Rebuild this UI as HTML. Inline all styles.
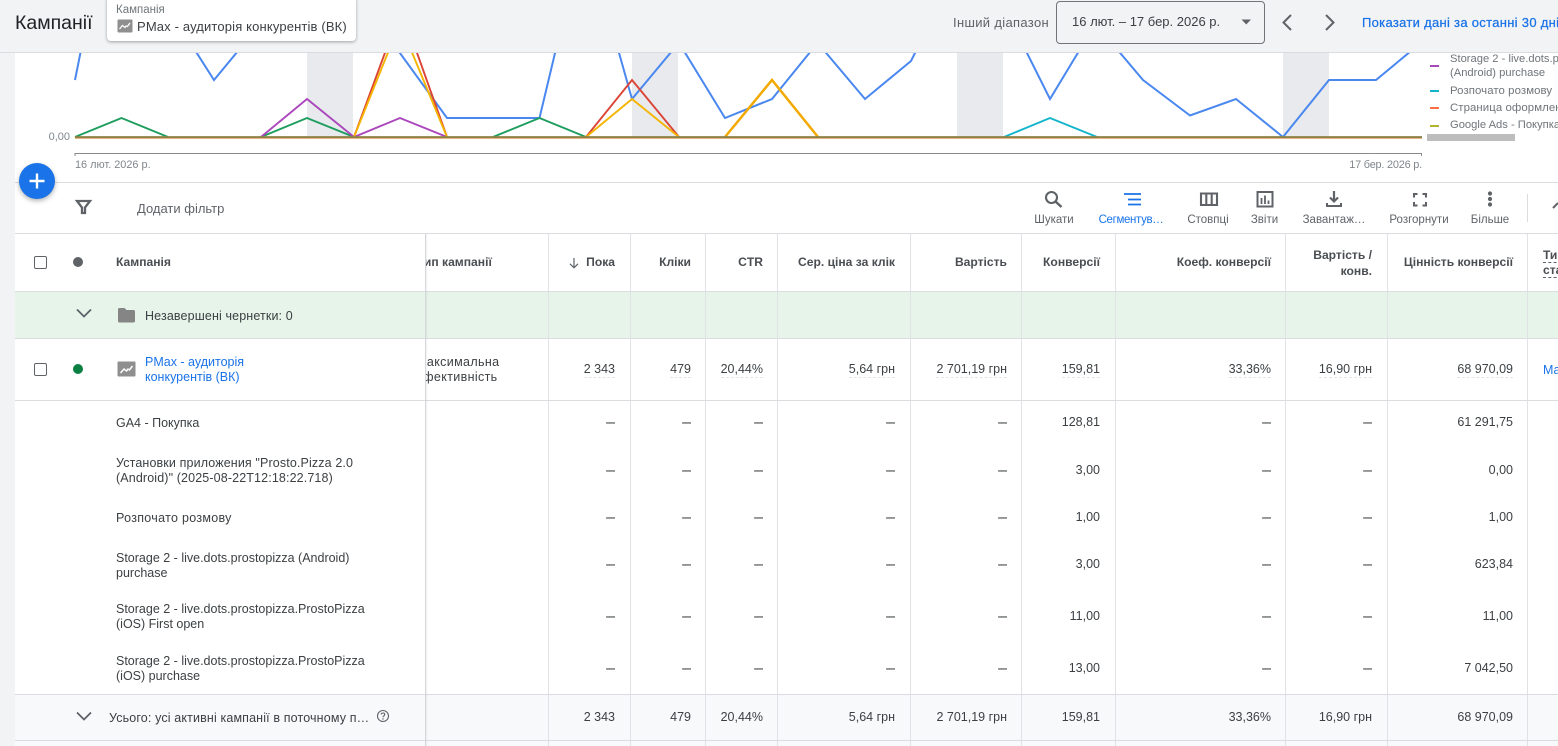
<!DOCTYPE html>
<html lang="uk"><head><meta charset="utf-8"><title>Кампанії</title>
<style>
html,body{margin:0;padding:0;width:1558px;height:746px;overflow:hidden;background:#f1f3f4;font-family:"Liberation Sans",Arial,sans-serif;color:#3c4043;font-size:12.5px}
div,span,svg{position:absolute;box-sizing:border-box}
.nw{white-space:nowrap}
#main{left:15px;top:53px;width:1543px;height:693px;background:#fff}
.hl{left:15px;width:1543px;height:1px;background:#dadce0}
.vl{top:234px;width:1px;height:512px;background:#e0e2e5}
.row{left:15px;width:1543px}
.c{white-space:nowrap;text-align:right;top:-1px}
.h .c{top:0}
.c1{right:943px}.c2{right:867px}.c3{right:795px}.c4{right:663px}.c5{right:551px}.c6{right:458px}.c7{right:287px}.c8{right:186px}.c9{right:45px}
.u{border-bottom:1px dashed #e3e5e8;line-height:15px;display:inline-block}
.d{font-size:16px;color:#3c4043}
.h{font-weight:bold;color:#4a4d51;font-size:12.1px}
.n{left:101px;white-space:nowrap;line-height:15px;color:#3c4043}
.tb{font-size:11.5px;color:#5f6368;white-space:nowrap;top:213px;line-height:14px;transform:translateX(-50%)}
.ic{top:189px;width:22px;height:22px}
.lg{left:1450px;font-size:11.4px;letter-spacing:.08px;color:#70757a;white-space:nowrap;line-height:14px}
.ld{left:1430px;width:9px;height:2px}
.cb{left:34px;width:13px;height:13px;border:1.5px solid #5f6368;border-radius:2px;background:#fff}
</style></head><body>
<div id="main"></div>

<svg style="left:0;top:0" width="1558" height="182" viewBox="0 0 1558 182" fill="none">
<defs><clipPath id="cp"><rect x="15" y="53" width="1543" height="129"/></clipPath></defs>
<g clip-path="url(#cp)" stroke-width="1.900" stroke-linejoin="miter">
<g fill="#e8eaed" stroke="none"><rect x="307" y="53" width="46" height="84"/><rect x="632" y="53" width="46" height="84"/><rect x="957" y="53" width="46" height="84"/><rect x="1283" y="53" width="46" height="84"/></g>
<path stroke="#4a88f0" stroke-width="2" d="M75 80L81 50M195.500 51L214 80L238 51M398.500 51L447 118L539.500 118L555.500 51M618.500 51L632 99L672 51M684 51L725 118L772 99L811 51M824.500 51L865 99L911 61L916 51M1026 51L1050 99L1079 51M1118.500 51L1143 80L1190 115.500L1236 99L1283 137L1329 80L1376 80L1411 51"/>
<path stroke="#1e9e5e" d="M75 137L121.500 118L168 137M261 137L307 118L354 137M493 137L539.500 118L586 137"/>
<path stroke="#ab47bc" d="M261 137L307 99L354 137L400 118L447 137"/>
<path stroke="#db4437" d="M354 137L386 50M416 50L447 137M586 137L632 80L679 137"/>
<path stroke="#f4b400" d="M354 137L389 50M411 50L447 137M586 137L632 99L679 137"/>
<path stroke="#f2a900" stroke-width="2.500" d="M725 137L772 80L818 137"/>
<path stroke="#12b5cb" d="M1004 137L1050 118L1097 137"/>
<path stroke="#e8a06a" stroke-width="1" d="M75 138.300L1422 138.300"/>
<path stroke="#8f8246" stroke-width="2" d="M75 137.100L1422 137.100"/>
</g>
<path stroke="#8a8a8a" stroke-width="1" d="M75 156V153.500H1421.500V156"/>
</svg>

<span class="nw" style="left:75px;top:158px;font-size:10.900px;color:#80868b;line-height:14px">16 лют. 2026 р.</span>
<span class="nw" style="right:136px;top:158px;font-size:10.900px;letter-spacing:-.2px;color:#80868b;line-height:14px">17 бер. 2026 р.</span>
<span class="nw" style="right:1488px;top:130px;font-size:11px;color:#80868b;line-height:14px">0,00</span>

<div class="ld" style="top:65px;background:#ab47bc"></div><div class="lg" style="top:52px;font-size:11.200px;letter-spacing:0">Storage 2 - live.dots.p<br>(Android) purchase</div>
<div class="ld" style="top:90px;background:#12b5cb"></div><div class="lg" style="top:83.500px">Розпочато розмову</div>
<div class="ld" style="top:107px;background:#ff7043"></div><div class="lg" style="top:100.500px">Страница оформлен</div>
<div class="ld" style="top:125px;background:#afb42b"></div><div class="lg" style="top:117.500px;font-size:11.200px;letter-spacing:0">Google Ads - Покупка</div>
<div style="left:1427px;top:134px;width:88px;height:7px;background:#bdbdbd"></div>

<!-- header -->
<div style="left:0;top:0;width:1558px;height:53px;background:#f1f3f4;border-bottom:1px solid #dadce0"></div>
<span class="nw" style="left:15px;top:11px;font-size:19.500px;line-height:24px;color:#202124">Кампанії</span>
<div style="left:107px;top:-4px;width:249px;height:45px;background:#fff;border-radius:4px;box-shadow:0 1px 3px rgba(60,64,67,.45)"></div>
<span class="nw" style="left:116px;top:3px;font-size:11.500px;color:#70757a;line-height:14px">Кампанія</span>
<svg style="left:117px;top:19px" width="16" height="14" viewBox="0 0 16 14"><rect x="0.500" y="0.500" width="15" height="13" rx="1" fill="#8f8f8f"/><path d="M2.500 10L5.500 6.500L8 8.500L9.500 6.500M10 8L13 4" stroke="#fff" stroke-width="1.300" fill="none"/></svg>
<span class="nw" style="left:137px;top:19px;font-size:13px;letter-spacing:.15px;color:#3c4043;line-height:16px">PMax - аудиторія конкурентів (ВК)</span>

<span class="nw" style="left:953px;top:15px;font-size:13px;letter-spacing:.33px;color:#5f6368;line-height:15px">Інший діапазон</span>
<div style="left:1056px;top:1px;width:209px;height:43px;border:1px solid #70757a;border-radius:4px"></div>
<span class="nw" style="left:1072px;top:14px;font-size:13px;color:#3c4043;line-height:16px">16 лют. – 17 бер. 2026 р.</span>
<svg style="left:1241px;top:19px" width="11" height="6" viewBox="0 0 11 6"><path d="M0.500 0.500H10L5.250 5.500Z" fill="#5f6368"/></svg>
<svg style="left:1280px;top:13px" width="14" height="19" viewBox="0 0 14 19" fill="none"><path d="M11 2L3.500 9.500L11 17" stroke="#5f6368" stroke-width="2"/></svg>
<svg style="left:1323px;top:13px" width="14" height="19" viewBox="0 0 14 19" fill="none"><path d="M3 2L10.500 9.500L3 17" stroke="#5f6368" stroke-width="2"/></svg>
<span class="nw" style="left:1362px;top:15px;font-size:13px;letter-spacing:.3px;-webkit-text-stroke:.25px #1a73e8;color:#1a73e8;line-height:15px">Показати дані за останні 30 днів</span>

<!-- toolbar -->
<div class="hl" style="top:182px"></div>
<div class="hl" style="top:233px"></div>
<svg style="left:74px;top:198px" width="19" height="19" viewBox="0 0 19 19" fill="none"><path d="M3 3H16L11 9.500V15H8V9.500Z" stroke="#5f6368" stroke-width="2.300"/></svg>
<span class="nw" style="left:137px;top:201px;font-size:13px;color:#5f6368;line-height:15px">Додати фільтр</span>

<svg class="ic" style="left:1042px" viewBox="0 0 22 22" fill="none"><circle cx="9.500" cy="8.500" r="5.500" stroke="#5f6368" stroke-width="2.100"/><path d="M13.500 12.500L19.500 18" stroke="#5f6368" stroke-width="2.500"/></svg>
<svg class="ic" style="left:1121px" viewBox="0 0 22 22" fill="none"><path d="M3 5H20M7 10.500H20M7 15.500H20" stroke="#1a73e8" stroke-width="1.800"/></svg>
<svg class="ic" style="left:1197px" viewBox="0 0 22 22" fill="none"><path d="M4 4.500H20V16H4ZM9.300 4.500V16M14.700 4.500V16" stroke="#5f6368" stroke-width="2.100"/></svg>
<svg class="ic" style="left:1254px" viewBox="0 0 22 22" fill="none"><rect x="3.500" y="3" width="15" height="14.500" stroke="#5f6368" stroke-width="2"/><path d="M7.500 9V15M11 6.500V15M14.500 11.500V15" stroke="#5f6368" stroke-width="1.800"/></svg>
<svg class="ic" style="left:1323px" viewBox="0 0 22 22" fill="none"><path d="M11 2V12M7 8.500L11 12.500L15 8.500" stroke="#5f6368" stroke-width="2.200"/><path d="M4 14V17H18V14" stroke="#5f6368" stroke-width="2"/></svg>
<svg class="ic" style="left:1408px" viewBox="0 0 22 22" fill="none"><path d="M6 8.500V5H9.500M14.500 5H18V8.500M18 13V16.500H14.500M9.500 16.500H6V13" stroke="#5f6368" stroke-width="2"/></svg>
<svg class="ic" style="left:1479px" viewBox="0 0 22 22"><circle cx="11" cy="4.500" r="2.100" fill="#5f6368"/><circle cx="11" cy="10" r="2.100" fill="#5f6368"/><circle cx="11" cy="15.500" r="2.100" fill="#5f6368"/></svg>
<span class="tb" style="left:1054px">Шукати</span>
<span class="tb" style="left:1131px;color:#1a73e8;letter-spacing:-.35px">Сегментув…</span>
<span class="tb" style="left:1208px">Стовпці</span>
<span class="tb" style="left:1264.500px">Звіти</span>
<span class="tb" style="left:1334px">Завантаж…</span>
<span class="tb" style="left:1419px">Розгорнути</span>
<span class="tb" style="left:1490px">Більше</span>
<div style="left:1527px;top:194px;width:1px;height:28px;background:#dadce0"></div>
<svg style="left:1552px;top:200px" width="6" height="10" viewBox="0 0 6 10" fill="none"><path d="M1 8L6 3" stroke="#5f6368" stroke-width="2"/></svg>

<!-- row backgrounds -->
<div class="row" style="top:292px;height:46px;background:#e6f4ea"></div>
<div class="row" style="top:695px;height:51px;background:#f8f9fa"></div>

<!-- vertical lines -->
<div class="vl" style="left:548px"></div><div class="vl" style="left:630px"></div><div class="vl" style="left:705px"></div><div class="vl" style="left:777px"></div><div class="vl" style="left:910px"></div><div class="vl" style="left:1021px"></div><div class="vl" style="left:1115px"></div><div class="vl" style="left:1285px"></div><div class="vl" style="left:1387px"></div><div class="vl" style="left:1527px"></div>

<!-- horizontal lines -->
<div class="hl" style="top:291px"></div><div class="hl" style="top:338px"></div><div class="hl" style="top:400px"></div><div class="hl" style="top:694px"></div><div class="hl" style="top:740px"></div>

<!-- clipped scrolled column -->
<div style="left:426px;top:234px;width:122px;height:200px;overflow:hidden">
<span class="nw h" style="left:-9px;top:21px;line-height:15px">Тип кампанії</span>
<span class="nw" style="left:-10px;top:121px;line-height:15px;letter-spacing:.35px">Максимальна<br>ефективність</span>
</div>

<!-- sticky divider -->
<div style="left:425px;top:234px;width:1px;height:512px;background:#d5d7da"></div>
<div style="left:426px;top:234px;width:2px;height:512px;background:linear-gradient(90deg,rgba(0,0,0,.06),rgba(0,0,0,0))"></div>

<!-- column header -->
<div class="row h" style="top:234px;height:57px;line-height:57px">
<span class="nw" style="left:101px;top:0">Кампанія</span>
<span class="c c1">Пока</span>
<svg style="left:553px;top:23px" width="12" height="12" viewBox="0 0 12 12" fill="none"><path d="M6 1V10.500M2 6.800L6 10.800L10 6.800" stroke="#5f6368" stroke-width="1.200"/></svg>
<span class="c c2">Кліки</span><span class="c c3">CTR</span><span class="c c4">Сер. ціна за клік</span><span class="c c5">Вартість</span><span class="c c6">Конверсії</span><span class="c c7">Коеф. конверсії</span>
<span class="c c8" style="line-height:16px;top:13px">Вартість /<br>конв.</span>
<span class="c c9">Цінність конверсії</span>
</div>
<div class="nw h" style="left:1543px;top:248px;line-height:14px"><span style="position:static;border-bottom:1px dashed #5f6368;display:block;width:40px">Тип</span><span style="position:static;border-bottom:1px dashed #5f6368;display:block;width:40px">ставки</span></div>
<div class="cb" style="top:256px"></div>
<div style="left:73px;top:257px;width:10px;height:10px;border-radius:50%;background:#5f6368"></div>

<!-- drafts row -->
<svg style="left:75px;top:307px" width="18" height="14" viewBox="0 0 18 14" fill="none"><path d="M2 2.500L9 9.500L16 2.500" stroke="#5f6368" stroke-width="1.800"/></svg>
<svg style="left:117px;top:306px" width="19" height="18" viewBox="0 0 19 18"><path d="M1 3.500Q1 2 2.500 2H7.500L9.500 4H16.500Q18 4 18 5.500V15Q18 16.500 16.500 16.500H2.500Q1 16.500 1 15Z" fill="#858585"/></svg>
<span class="nw" style="left:145px;top:309px;line-height:15px;letter-spacing:.13px">Незавершені чернетки: 0</span>

<!-- main row -->
<div class="cb" style="top:363px"></div>
<div style="left:73px;top:364px;width:10px;height:10px;border-radius:50%;background:#0b8043"></div>
<svg style="left:117px;top:361px" width="19" height="16" viewBox="0 0 19 16"><rect x="0.500" y="0.500" width="18" height="15" rx="1" fill="#8f8f8f"/><path d="M3.500 12L7 8L9.500 10L11.500 7.500M12 9.500L15.500 5" stroke="#fff" stroke-width="1.500" fill="none"/></svg>
<span class="nw" style="left:145px;top:355px;line-height:15px;color:#1a73e8">PMax - аудиторія<br>конкурентів (ВК)</span>
<div class="row" style="top:363px;height:16px;line-height:15px">
<span class="c c1 u">2 343</span><span class="c c2 u">479</span><span class="c c3 u">20,44%</span><span class="c c4 u">5,64 грн</span><span class="c c5 u">2 701,19 грн</span><span class="c c6 u">159,81</span><span class="c c7 u">33,36%</span><span class="c c8 u">16,90 грн</span><span class="c c9 u">68 970,09</span>
</div>
<span class="nw" style="left:1543px;top:363px;line-height:15px;color:#1a73e8">Максимальна</span>

<!-- sub rows -->
<div class="row" style="top:416px;height:15px;line-height:15px"><span class="n" style="top:0">GA4 - Покупка</span><span class="c c1 d">–</span><span class="c c2 d">–</span><span class="c c3 d">–</span><span class="c c4 d">–</span><span class="c c5 d">–</span><span class="c c6">128,81</span><span class="c c7 d">–</span><span class="c c8 d">–</span><span class="c c9">61 291,75</span></div>
<div class="row" style="top:464px;height:15px;line-height:15px"><span class="n" style="top:-8px;letter-spacing:.13px">Установки приложения "Prosto.Pizza 2.0<br>(Android)" (2025-08-22T12:18:22.718)</span><span class="c c1 d">–</span><span class="c c2 d">–</span><span class="c c3 d">–</span><span class="c c4 d">–</span><span class="c c5 d">–</span><span class="c c6">3,00</span><span class="c c7 d">–</span><span class="c c8 d">–</span><span class="c c9">0,00</span></div>
<div class="row" style="top:511px;height:15px;line-height:15px"><span class="n" style="top:0;letter-spacing:.3px">Розпочато розмову</span><span class="c c1 d">–</span><span class="c c2 d">–</span><span class="c c3 d">–</span><span class="c c4 d">–</span><span class="c c5 d">–</span><span class="c c6">1,00</span><span class="c c7 d">–</span><span class="c c8 d">–</span><span class="c c9">1,00</span></div>
<div class="row" style="top:558px;height:15px;line-height:15px"><span class="n" style="top:-7px">Storage 2 - live.dots.prostopizza (Android)<br>purchase</span><span class="c c1 d">–</span><span class="c c2 d">–</span><span class="c c3 d">–</span><span class="c c4 d">–</span><span class="c c5 d">–</span><span class="c c6">3,00</span><span class="c c7 d">–</span><span class="c c8 d">–</span><span class="c c9">623,84</span></div>
<div class="row" style="top:610px;height:15px;line-height:15px"><span class="n" style="top:-8px">Storage 2 - live.dots.prostopizza.ProstoPizza<br>(iOS) First open</span><span class="c c1 d">–</span><span class="c c2 d">–</span><span class="c c3 d">–</span><span class="c c4 d">–</span><span class="c c5 d">–</span><span class="c c6">11,00</span><span class="c c7 d">–</span><span class="c c8 d">–</span><span class="c c9">11,00</span></div>
<div class="row" style="top:662px;height:15px;line-height:15px"><span class="n" style="top:-8px">Storage 2 - live.dots.prostopizza.ProstoPizza<br>(iOS) purchase</span><span class="c c1 d">–</span><span class="c c2 d">–</span><span class="c c3 d">–</span><span class="c c4 d">–</span><span class="c c5 d">–</span><span class="c c6">13,00</span><span class="c c7 d">–</span><span class="c c8 d">–</span><span class="c c9">7 042,50</span></div>

<!-- total row -->
<svg style="left:75px;top:710px" width="18" height="14" viewBox="0 0 18 14" fill="none"><path d="M2 2.500L9 9.500L16 2.500" stroke="#5f6368" stroke-width="1.800"/></svg>
<span class="nw" style="left:109px;top:711px;line-height:15px;letter-spacing:.14px">Усього: усі активні кампанії в поточному п…</span>
<svg style="left:376px;top:709px" width="14" height="14" viewBox="0 0 14 14" fill="none"><circle cx="7" cy="7" r="5.500" stroke="#5f6368" stroke-width="1.100"/><path d="M5.200 5.500C5.200 3.500 8.800 3.500 8.800 5.500C8.800 6.800 7 6.800 7 8.300" stroke="#5f6368" stroke-width="1.100"/><circle cx="7" cy="10" r=".7" fill="#5f6368"/></svg>
<div class="row" style="top:711px;height:15px;line-height:15px"><span class="c c1">2 343</span><span class="c c2">479</span><span class="c c3">20,44%</span><span class="c c4">5,64 грн</span><span class="c c5">2 701,19 грн</span><span class="c c6">159,81</span><span class="c c7">33,36%</span><span class="c c8">16,90 грн</span><span class="c c9">68 970,09</span></div>

<!-- FAB -->
<div style="left:19px;top:163px;width:36px;height:36px;border-radius:50%;background:#1a73e8;box-shadow:0 2px 5px rgba(60,64,67,.4)"></div>
<svg style="left:19px;top:163px" width="36" height="36" viewBox="0 0 36 36"><path d="M18 10.500V25.500M10.500 18H25.500" stroke="#fff" stroke-width="2.400"/></svg>
</body></html>
